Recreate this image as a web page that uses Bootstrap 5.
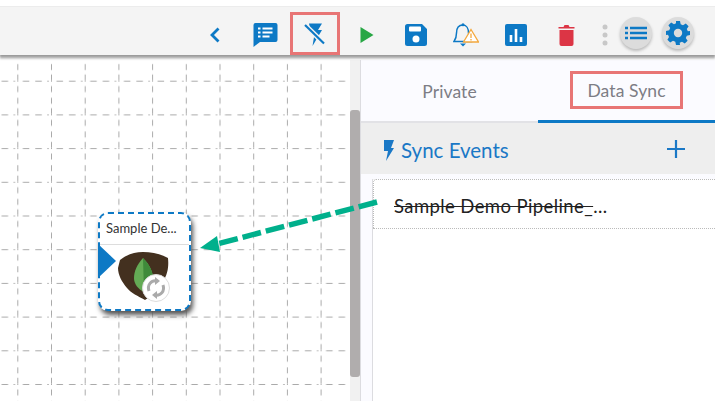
<!DOCTYPE html>
<html lang="en">
<head>
<meta charset="utf-8">
<title>Data Sync</title>
<link href="https://cdn.jsdelivr.net/npm/bootstrap@5.3.0/dist/css/bootstrap.min.css" rel="stylesheet">
<style>
html,body{height:100%;overflow:hidden;background:#fff;}
body{font-family:"Lato","Noto Sans",sans-serif;}
.app-shell{height:401px;width:715px;padding-top:6px;position:relative;overflow:hidden;}
.tool-bar{height:49px;background:#f4f4f4;border-top:1px solid #ececec;box-shadow:0 2px 2px #999,0 4px 2px #ccc;padding-right:21px;position:relative;z-index:3;}
.tool-item{width:50px;height:43px;margin-top:5px;padding-top:2px;}
.tool-item svg{display:block;}
.tool-wide{width:51px;padding-left:3px;}
.tool-marked{outline:3px solid #e87575;outline-offset:-3px;}
.tool-more{width:10px;margin:10px 10px 0 9px;padding-top:7px;}
.tool-round{width:32px;height:32px;border-radius:50%;background:#dcdcdc;box-shadow:0 2px 3px #bbb;margin-top:10px;}
.tool-round+.tool-round{margin-left:10px;}
.work-area{height:341px;margin-top:5px;}
.grid-canvas{width:350px;position:relative;background:#fff;}
.grid-canvas>svg{display:block;}
.scroll-track{width:10px;background:#f1f1f1;padding-top:50px;padding-bottom:24px;}
.scroll-thumb{background:#b0adad;border-radius:3px;height:267px;}
.side-panel{width:355px;background:#fbfbff;border-left:1px solid #dcdce0;}
.panel-tabs{height:63px;border-bottom:2px solid #e2e2e6;}
.panel-tab{flex:1 1 50%;color:#7d7d85;font-size:17.500px;letter-spacing:.1px;position:relative;margin-bottom:-2px;padding-top:2px;}
.panel-tab.tab-on{border-bottom:3px solid #0d79c5;padding-top:0;}
.tab-label{border:3px solid #e87575;width:113px;height:38px;margin-top:-1px;padding-top:3px;}
.sync-head{height:51px;background:#eeeeee;padding:0 30px 0 22px;color:#1a78c6;font-size:20.500px;}
.sync-title{padding-top:3px;}
.sync-bolt{margin-right:7px;}
.sync-list{margin:5px 0 0 11px;background:#fff;border-left:1px solid #dcdce0;height:222px;}
.sync-row{height:50px;border:1px dotted #bbb;border-right:0;border-radius:3px 0 0 0;padding:5px 0 0 20px;font-size:18.500px;letter-spacing:.4px;color:#222;}
.sync-text{text-decoration:line-through;}
.pipe-node{position:absolute;left:98px;top:152px;width:93px;height:99px;background:#fff;border:2px dashed #0d79c5;border-radius:10px;box-shadow:2px 4px 5px #555;}
.node-title{height:31px;border-bottom:1px solid #ddd;font-size:13px;color:#333;padding:0 0 0 6px;white-space:nowrap;}
.node-graphic{position:absolute;left:-2px;top:30px;}
.flow-arrow{position:absolute;left:0;top:0;z-index:2;pointer-events:none;}
</style>
</head>
<body>
<div class="app-shell">
  <div class="tool-bar d-flex justify-content-end align-items-start">
    <div class="tool-item d-flex align-items-center justify-content-center">
      <svg width="12" height="18" viewBox="0 0 12 18"><path d="M9.500 2.500 3 9l6.500 6.500" fill="none" stroke="#0d79c5" stroke-width="2.800"/></svg>
    </div>
    <div class="tool-item d-flex align-items-center justify-content-center">
      <svg width="25" height="24" viewBox="0 0 25 24"><path d="M2.500 0h20a2 2 0 0 1 2 2v15a2 2 0 0 1-2 2H7l-6.500 5V2a2 2 0 0 1 2-2z" fill="#0d79c5"/><path d="M5 5.500h2.500M9.500 5.500h10M5 9.500h2.500M9.500 9.500h10M5 13.500h2.500M9.500 13.500h7" stroke="#fff" stroke-width="2"/></svg>
    </div>
    <div class="tool-item tool-marked d-flex align-items-center justify-content-center">
      <svg width="22" height="23" viewBox="0 0 22 23"><path d="M5 0.500h13l-4 6.500h4L8.500 23l2-12H7z" fill="#0d79c5"/><path d="M1 2 20 20.500" stroke="#f4f4f4" stroke-width="5"/><path d="M1 2 20 20.500" stroke="#0d79c5" stroke-width="2.200"/></svg>
    </div>
    <div class="tool-item tool-wide d-flex align-items-center justify-content-center">
      <svg width="14" height="16" viewBox="0 0 14 16"><path d="M0.500 0 13.500 8 0.500 16z" fill="#28a745"/></svg>
    </div>
    <div class="tool-item d-flex align-items-center justify-content-center">
      <svg width="22" height="22" viewBox="0 0 22 22"><path d="M2.500 0H17l5 5v14.500a2.500 2.500 0 0 1-2.500 2.500h-17A2.500 2.500 0 0 1 0 19.500v-17A2.500 2.500 0 0 1 2.500 0z" fill="#0d79c5"/><rect x="4" y="2.500" width="12" height="5" rx="1" fill="#fff"/><circle cx="11" cy="15" r="3.500" fill="#fff"/></svg>
    </div>
    <div class="tool-item d-flex align-items-center justify-content-center">
      <svg width="26" height="24" viewBox="0 0 26 24"><path d="M10 2c-4.500 0-6.500 3.500-6.500 8 0 4-1 6.500-2.500 8.500h17c-1.500-2-2.500-4.500-2.500-8.500 0-4.500-2-8-5.500-8z" fill="none" stroke="#0d79c5" stroke-width="1.500"/><circle cx="10" cy="1.800" r="1.500" fill="#0d79c5"/><path d="M7 20.500h6l-3 3z" fill="#0d79c5"/><path d="M18 6.500 25.500 19h-15z" fill="#fff" stroke="#f4a83c" stroke-width="1.300"/><path d="M18 10.500v4.500M18 16v1.500" stroke="#f4a83c" stroke-width="1.300"/></svg>
    </div>
    <div class="tool-item d-flex align-items-center justify-content-center">
      <svg width="22" height="22" viewBox="0 0 22 22"><rect width="22" height="22" rx="2" fill="#0d79c5"/><path d="M6 11v7M11 5v13M16 13v5" stroke="#fff" stroke-width="2.600"/></svg>
    </div>
    <div class="tool-item d-flex align-items-center justify-content-center">
      <svg width="17" height="22" viewBox="0 0 17 22"><path d="M0.500 3h16v1.500H.5zM5.500 3l1-2h4l1 2z" fill="#dc3545"/><path d="M1.500 6h14v14a2 2 0 0 1-2 2h-10a2 2 0 0 1-2-2z" fill="#dc3545"/></svg>
    </div>
    <div class="tool-more d-flex flex-column align-items-center">
      <svg width="6" height="22" viewBox="0 0 6 22"><circle cx="3" cy="3" r="2.500" fill="#c8c8c8"/><circle cx="3" cy="11" r="2.500" fill="#c8c8c8"/><circle cx="3" cy="19" r="2.500" fill="#c8c8c8"/></svg>
    </div>
    <div class="tool-round d-flex align-items-center justify-content-center">
      <svg width="22" height="14" viewBox="0 0 22 14"><path d="M0 2h3M5 2h17M0 7h3M5 7h17M0 12h3M5 12h17" stroke="#0d79c5" stroke-width="2.500"/></svg>
    </div>
    <div class="tool-round d-flex align-items-center justify-content-center">
      <svg width="24" height="24" viewBox="0 0 24 24"><path d="M10 0h4l.7 3.200 2.300 1 2.800-1.800 2.800 2.800-1.800 2.800 1 2.300L24 10v4l-3.200.7-1 2.300 1.800 2.800-2.800 2.800-2.800-1.800-2.300 1L14 24h-4l-.7-3.200-2.300-1-2.800 1.800-2.800-2.800L3 16l-1-2.300L0 14v-4l3.200-.7 1-2.300L2.400 4.200l2.800-2.800L8 3.200l2-.9z" fill="#0d79c5"/><circle cx="12" cy="12" r="4.200" fill="#dcdcdc"/></svg>
    </div>
  </div>

  <div class="work-area d-flex">
    <div class="grid-canvas">
      <svg width="350" height="341">
        <defs>
          <pattern id="cellgrid" x="-16.400" y="-13" width="33.700" height="33.700" patternUnits="userSpaceOnUse">
            <path d="M0 0.500h1M5.500 0.500h6.500M18 0.500h6.500M30 0.500h1.500" stroke="#aaa" stroke-width="1" fill="none"/>
            <path d="M0.500 0v1M0.500 5.500v6M0.500 17v6M0.500 27.500v6" stroke="#aaa" stroke-width="1" fill="none"/>
          </pattern>
        </defs>
        <rect width="350" height="341" fill="url(#cellgrid)"/>
      </svg>
      <div class="pipe-node">
        <div class="node-title d-flex align-items-center">Sample De...</div>
        <svg class="node-graphic" width="92" height="66" viewBox="0 0 92 66">
          <path d="M-1 -1 18 17-1 35z" fill="#0d79c5"/>
          <path d="M22 16C28 11 36 8 45 8 54 8 63 10 70 14 71 24 69 30 67 34 63 44 54 52 47 56 40 52 33 49 29 44 24 38 20 31 20 24z" fill="#43301f"/>
          <path d="M45 14c7 7 10 14 10 21 0 6-4 10-9 13-6-3-10-8-10-14 0-7 3-13 9-20z" fill="#64ab55"/>
          <path d="M45 14c7 7 10 14 10 21 0 6-4 10-9 13z" fill="#3f8a3a"/>
          <circle cx="58" cy="44" r="13.500" fill="#fff" stroke="#ddd"/>
          <path d="M51 47c-2-6 2-11 8-10M65 41c2 6-2 11-8 10" fill="none" stroke="#aaa" stroke-width="3"/>
          <path d="M57 33l5 4-5 4zM59 47l-5 4 5 4z" fill="#aaa"/>
        </svg>
      </div>
    </div>
    <div class="scroll-track"><div class="scroll-thumb"></div></div>
    <div class="side-panel">
      <div class="panel-tabs d-flex">
        <div class="panel-tab d-flex align-items-center justify-content-center">Private</div>
        <div class="panel-tab tab-on d-flex align-items-center justify-content-center">
          <div class="tab-label d-flex align-items-center justify-content-center">Data Sync</div>
        </div>
      </div>
      <div class="sync-head d-flex align-items-center justify-content-between">
        <div class="sync-title d-flex align-items-center">
          <svg class="sync-bolt" width="11" height="21" viewBox="0 0 11 21"><path d="M1 0h10L8 8h3L3 21l2-10H1z" fill="#1a78c6"/></svg>
          <span>Sync Events</span>
        </div>
        <svg width="18" height="18" viewBox="0 0 18 18"><path d="M9 0v18M0 9h18" stroke="#1a78c6" stroke-width="2.200"/></svg>
      </div>
      <div class="sync-list">
        <div class="sync-row d-flex align-items-center"><span><span class="sync-text">Sample Demo Pipeline_</span>...</span></div>
      </div>
    </div>
  </div>

  <svg class="flow-arrow" width="715" height="401">
    <path d="M377 202 219 243.500" stroke="#00b08c" stroke-width="5.500" stroke-dasharray="19 5" fill="none"/>
    <path d="M200 248 217 236 220 252z" fill="#00b08c"/>
  </svg>
</div>
<script src="https://cdn.jsdelivr.net/npm/bootstrap@5.3.0/dist/js/bootstrap.bundle.min.js"></script>
</body>
</html>
